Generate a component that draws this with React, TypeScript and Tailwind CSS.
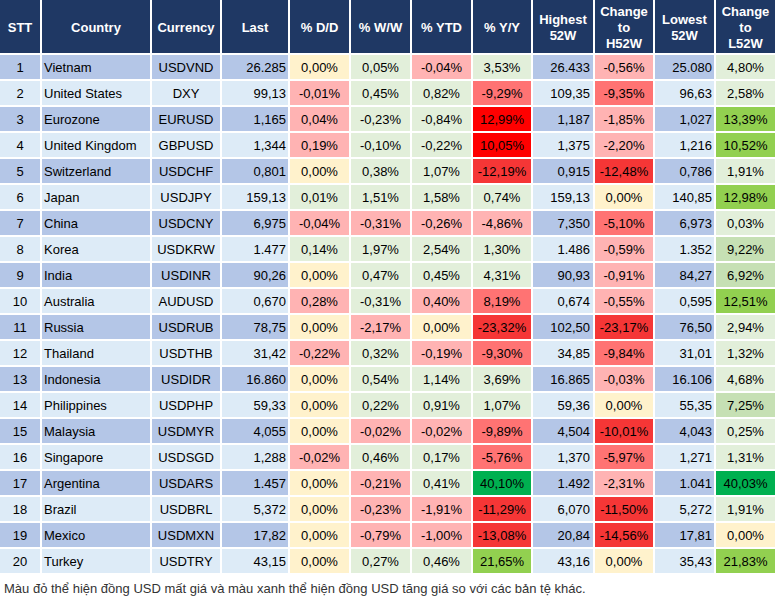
import React from 'react';

type C = 'Y' | 'G1' | 'G2' | 'G3' | 'G4' | 'R1' | 'R2' | 'R3' | 'R4';

const heat: Record<C, string> = {
  Y: 'bg-[#fff2cc]',
  G1: 'bg-[#e2efda]',
  G2: 'bg-[#c6e0b4]',
  G3: 'bg-[#92d050]',
  G4: 'bg-[#00b050]',
  R1: 'bg-[#ffb3b3]',
  R2: 'bg-[#ff7373]',
  R3: 'bg-[#f53636]',
  R4: 'bg-[#ff0000]',
};

// stt, country, currency, last, dd, ww, ytd, yy, high, chH, low, chL, colours [dd, ww, ytd, yy, chH, chL]
const rows: [string, string, string, string, string, string, string, string, string, string, string, C[]][] = [
  ['Vietnam', 'USDVND', '26.285', '0,00%', '0,05%', '-0,04%', '3,53%', '26.433', '-0,56%', '25.080', '4,80%', ['Y', 'G1', 'R1', 'G1', 'R1', 'G1']],
  ['United States', 'DXY', '99,13', '-0,01%', '0,45%', '0,82%', '-9,29%', '109,35', '-9,35%', '96,63', '2,58%', ['R1', 'G1', 'G1', 'R2', 'R2', 'G1']],
  ['Eurozone', 'EURUSD', '1,165', '0,04%', '-0,23%', '-0,84%', '12,99%', '1,187', '-1,85%', '1,027', '13,39%', ['R1', 'G1', 'G1', 'R4', 'R1', 'G3']],
  ['United Kingdom', 'GBPUSD', '1,344', '0,19%', '-0,10%', '-0,22%', '10,05%', '1,375', '-2,20%', '1,216', '10,52%', ['R1', 'G1', 'G1', 'R4', 'R1', 'G3']],
  ['Switzerland', 'USDCHF', '0,801', '0,00%', '0,38%', '1,07%', '-12,19%', '0,915', '-12,48%', '0,786', '1,91%', ['Y', 'G1', 'G1', 'R3', 'R3', 'G1']],
  ['Japan', 'USDJPY', '159,13', '0,01%', '1,51%', '1,58%', '0,74%', '159,13', '0,00%', '140,85', '12,98%', ['G1', 'G1', 'G1', 'G1', 'Y', 'G3']],
  ['China', 'USDCNY', '6,975', '-0,04%', '-0,31%', '-0,26%', '-4,86%', '7,350', '-5,10%', '6,973', '0,03%', ['R1', 'R1', 'R1', 'R1', 'R2', 'G1']],
  ['Korea', 'USDKRW', '1.477', '0,14%', '1,97%', '2,54%', '1,30%', '1.486', '-0,59%', '1.352', '9,22%', ['G1', 'G1', 'G1', 'G1', 'R1', 'G2']],
  ['India', 'USDINR', '90,26', '0,00%', '0,47%', '0,45%', '4,31%', '90,93', '-0,91%', '84,27', '6,92%', ['Y', 'G1', 'G1', 'G1', 'R1', 'G2']],
  ['Australia', 'AUDUSD', '0,670', '0,28%', '-0,31%', '0,40%', '8,19%', '0,674', '-0,55%', '0,595', '12,51%', ['R1', 'G1', 'R1', 'R2', 'R1', 'G3']],
  ['Russia', 'USDRUB', '78,75', '0,00%', '-2,17%', '0,00%', '-23,32%', '102,50', '-23,17%', '76,50', '2,94%', ['Y', 'R1', 'Y', 'R3', 'R3', 'G1']],
  ['Thailand', 'USDTHB', '31,42', '-0,22%', '0,32%', '-0,19%', '-9,30%', '34,85', '-9,84%', '31,01', '1,32%', ['R1', 'G1', 'R1', 'R2', 'R2', 'G1']],
  ['Indonesia', 'USDIDR', '16.860', '0,00%', '0,54%', '1,14%', '3,69%', '16.865', '-0,03%', '16.106', '4,68%', ['Y', 'G1', 'G1', 'G1', 'R1', 'G1']],
  ['Philippines', 'USDPHP', '59,33', '0,00%', '0,22%', '0,91%', '1,07%', '59,36', '0,00%', '55,35', '7,25%', ['Y', 'G1', 'G1', 'G1', 'Y', 'G2']],
  ['Malaysia', 'USDMYR', '4,055', '0,00%', '-0,02%', '-0,02%', '-9,89%', '4,504', '-10,01%', '4,043', '0,25%', ['Y', 'R1', 'R1', 'R2', 'R3', 'G1']],
  ['Singapore', 'USDSGD', '1,288', '-0,02%', '0,46%', '0,17%', '-5,76%', '1,370', '-5,97%', '1,271', '1,31%', ['R1', 'G1', 'G1', 'R2', 'R2', 'G1']],
  ['Argentina', 'USDARS', '1.457', '0,00%', '-0,21%', '0,41%', '40,10%', '1.492', '-2,31%', '1.041', '40,03%', ['Y', 'R1', 'G1', 'G4', 'R1', 'G4']],
  ['Brazil', 'USDBRL', '5,372', '0,00%', '-0,23%', '-1,91%', '-11,29%', '6,070', '-11,50%', '5,272', '1,91%', ['Y', 'R1', 'R1', 'R3', 'R3', 'G1']],
  ['Mexico', 'USDMXN', '17,82', '0,00%', '-0,79%', '-1,00%', '-13,08%', '20,84', '-14,56%', '17,81', '0,00%', ['Y', 'R1', 'R1', 'R3', 'R3', 'Y']],
  ['Turkey', 'USDTRY', '43,15', '0,00%', '0,27%', '0,46%', '21,65%', '43,16', '0,00%', '35,43', '21,83%', ['Y', 'G1', 'G1', 'G3', 'Y', 'G3']],
].map((r, i) => [String(i + 1), ...r] as any);

const headers = ['STT', 'Country', 'Currency', 'Last', '% D/D', '% W/W', '% YTD', '% Y/Y', 'Highest\n52W', 'Change\nto\nH52W', 'Lowest\n52W', 'Change\nto\nL52W'];

export default function App() {
  return (
    <div className="w-[777px] h-[602px] bg-white text-[13px] text-black" style={{ fontFamily: '"Liberation Sans", Arial, sans-serif' }}>
      <div className="grid w-[775px] grid-cols-[40px_108px_68px_66px_59px_59px_59px_58px_60px_58px_59px_59px] grid-rows-[53px_repeat(20,24px)] gap-[2px]">
        {headers.map((h) => (
          <div key={h} className="flex items-center justify-center whitespace-pre-line bg-[#1f3864] pt-[3px] text-center font-bold leading-[16px] text-white">
            {h}
          </div>
        ))}
        {rows.map((r) => {
          const stripe = Number(r[0]) % 2 === 1 ? 'bg-[#b4c6e7]' : 'bg-[#ddebf7]';
          const c = r[12];
          const cell = 'flex items-center pt-[2px]';
          return (
            <React.Fragment key={r[0]}>
              <div className={`${cell} justify-center ${stripe}`}>{r[0]}</div>
              <div className={`${cell} pl-[2px] ${stripe}`}>{r[1]}</div>
              <div className={`${cell} justify-center ${stripe}`}>{r[2]}</div>
              <div className={`${cell} justify-end pr-[2px] ${stripe}`}>{r[3]}</div>
              <div className={`${cell} justify-center ${heat[c[0]]}`}>{r[4]}</div>
              <div className={`${cell} justify-center ${heat[c[1]]}`}>{r[5]}</div>
              <div className={`${cell} justify-center ${heat[c[2]]}`}>{r[6]}</div>
              <div className={`${cell} justify-center ${heat[c[3]]}`}>{r[7]}</div>
              <div className={`${cell} justify-end pr-[3px] ${stripe}`}>{r[8]}</div>
              <div className={`${cell} justify-center ${heat[c[4]]}`}>{r[9]}</div>
              <div className={`${cell} justify-end pr-[2px] ${stripe}`}>{r[10]}</div>
              <div className={`${cell} justify-center ${heat[c[5]]}`}>{r[11]}</div>
            </React.Fragment>
          );
        })}
      </div>
      <p className="mt-[6px] pl-[4px] text-[#333333]">
        Màu đỏ thể hiện đồng USD mất giá và màu xanh thể hiện đồng USD tăng giá so với các bản tệ khác.
      </p>
    </div>
  );
}
